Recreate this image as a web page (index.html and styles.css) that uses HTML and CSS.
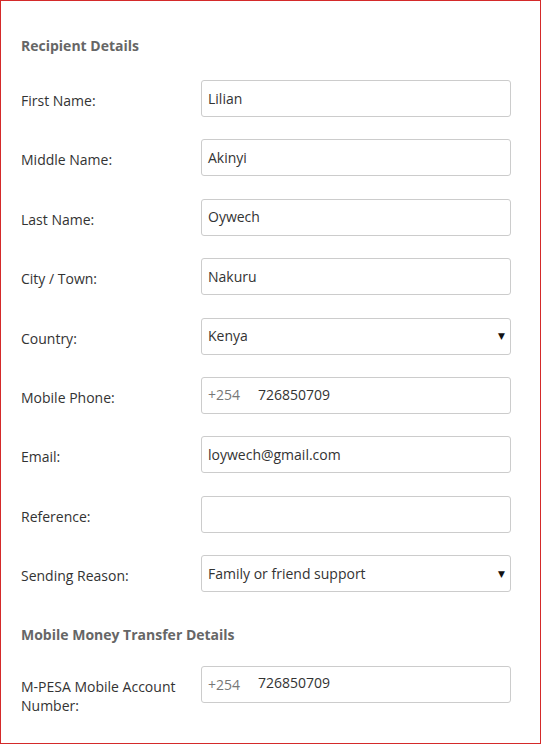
FILE: index.html
```html
<!DOCTYPE html>
<html>
<head>
<meta charset="utf-8">
<link rel="stylesheet" href="styles.css">
</head>
<body>
<div class="page">
  <h2 class="section-title">Recipient Details</h2>
  <div class="form-grid">
    <div class="label">First Name:</div>
    <div class="field"><span class="value">Lilian</span></div>

    <div class="label">Middle Name:</div>
    <div class="field"><span class="value">Akinyi</span></div>

    <div class="label">Last Name:</div>
    <div class="field"><span class="value">Oywech</span></div>

    <div class="label">City / Town:</div>
    <div class="field"><span class="value">Nakuru</span></div>

    <div class="label">Country:</div>
    <div class="field select"><span class="value">Kenya</span><span class="arrow">&#9660;</span></div>

    <div class="label">Mobile Phone:</div>
    <div class="field"><span class="prefix">+254</span><span class="value">726850709</span></div>

    <div class="label">Email:</div>
    <div class="field"><span class="value">loywech@gmail.com</span></div>

    <div class="label">Reference:</div>
    <div class="field"><span class="value"></span></div>

    <div class="label">Sending Reason:</div>
    <div class="field select"><span class="value">Family or friend support</span><span class="arrow">&#9660;</span></div>
  </div>

  <h2 class="section-title second">Mobile Money Transfer Details</h2>
  <div class="form-grid tight">
    <div class="label">M-PESA Mobile Account Number:</div>
    <div class="field"><span class="prefix">+254</span><span class="value raised">726850709</span></div>
  </div>
</div>
</body>
</html>
```

FILE: styles.css
```css
html, body {
  margin: 0;
  padding: 0;
  background: #fff;
}

.page {
  box-sizing: border-box;
  width: 541px;
  height: 744px;
  border: 1px solid #d42a2a;
  padding: 35px 30px 0 20px;
  font-family: "Open Sans", "Liberation Sans", sans-serif;
  font-size: 14px;
  color: #333;
  overflow: hidden;
}

.section-title {
  margin: 0;
  font-size: 14px;
  line-height: 20px;
  font-weight: bold;
  color: #666;
}

.section-title.second {
  margin-top: 33px;
}

.form-grid {
  display: grid;
  grid-template-columns: 170px 310px;
  column-gap: 10px;
  row-gap: 22.4px;
  margin-top: 24px;
}

.form-grid.tight {
  margin-top: 21px;
}

.label {
  padding-top: 11px;
  line-height: 19px;
  color: #333;
  padding-right: 6px;
}

.field {
  box-sizing: border-box;
  height: 37px;
  border: 1px solid #cccccc;
  border-radius: 3px;
  display: flex;
  align-items: center;
  padding: 0 6px;
  line-height: 20px;
  background: #fff;
}

.value {
  color: #333;
}

.value.raised {
  position: relative;
  top: -2px;
}

.prefix {
  color: #777;
  width: 50px;
  flex: none;
}

.select {
  justify-content: space-between;
  padding-right: 5px;
}

.arrow {
  font-size: 9px;
  color: #111;
  font-family: "DejaVu Sans", sans-serif;
}
```
